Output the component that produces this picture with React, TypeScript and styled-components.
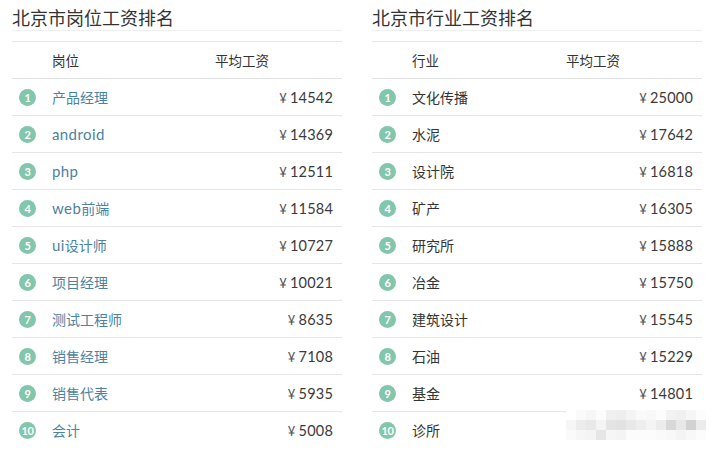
import React from "react";
import styled, { createGlobalStyle } from "styled-components";

const Global = createGlobalStyle`
  html, body { margin: 0; padding: 0; background: #fff; }
  body { font-family: Lato, "Noto Sans CJK SC", sans-serif; color: #333; }
`;

const Page = styled.div`
  display: grid;
  grid-template-columns: 330px 330px;
  column-gap: 30px;
  padding-left: 12px;
  width: 716px;
  height: 453px;
  box-sizing: border-box;
  overflow: hidden;
`;

const Panel = styled.section`
  display: flex;
  flex-direction: column;
`;

const Title = styled.h2`
  margin: 0;
  padding-top: 5px;
  height: 25px;
  line-height: 25px;
  font-size: 18px;
  font-weight: 400;
  color: #333;
  font-family: "Noto Sans CJK SC", sans-serif;
  border-bottom: 1px solid #efefef;
`;

const Table = styled.div`
  margin-top: 10px;
  border-top: 1px solid #e6e6e6;
`;

const Row = styled.div<{ $head?: boolean; $mid: number }>`
  display: grid;
  grid-template-columns: 40px ${(p) => p.$mid}px 1fr;
  align-items: center;
  height: 36px;
  border-bottom: 1px solid ${(p) => (p.$head ? "#e2e2e2" : "#e6e6e6")};
  &:last-child { border-bottom-color: transparent; }
`;

const HeadCell = styled.div`
  font-family: "Noto Sans CJK SC", sans-serif;
  font-size: 13.5px;
  color: #333;
`;

const BadgeCell = styled.div`
  display: flex;
  padding-left: 7px;
`;

const Badge = styled.span`
  width: 17px;
  height: 17px;
  border-radius: 50%;
  background: #82c6ab;
  color: #fff;
  font-family: Lato, sans-serif;
  font-weight: 700;
  font-size: 11px;
  display: inline-flex;
  align-items: center;
  justify-content: center;
  letter-spacing: -0.5px;
`;

const Name = styled.div<{ $link?: boolean }>`
  font-family: Lato, "Noto Sans CJK SC", sans-serif;
  font-size: 14px;
  color: ${(p) => (p.$link ? "#4c829f" : "#333")};
  white-space: nowrap;
`;

const Latin = styled.span`
  font-size: 15px;
  letter-spacing: 0.4px;
`;

const PriceWrap = styled.div`
  justify-self: end;
  padding-right: 9px;
  font-family: Lato, "Noto Sans CJK SC", sans-serif;
  font-size: 14.5px;
  color: #3a3a3a;
  letter-spacing: 0.2px;
`;

const Yen = styled.span`
  font-size: 13px;
  margin-right: 3px;
  color: #555;
`;

const Mosaic = styled.div`
  justify-self: end;
  align-self: start;
  display: grid;
  grid-template-columns: repeat(14, 10px);
  grid-auto-rows: 10px;
  margin-right: 2px;
  margin-top: -2px;
`;

const Tile = styled.span<{ $g: number }>`
  background: ${(p) => `rgb(${p.$g},${p.$g},${p.$g})`};
`;

const jobs: [string, string][] = [
  ["产品经理", "14542"],
  ["android", "14369"],
  ["php", "12511"],
  ["web前端", "11584"],
  ["ui设计师", "10727"],
  ["项目经理", "10021"],
  ["测试工程师", "8635"],
  ["销售经理", "7108"],
  ["销售代表", "5935"],
  ["会计", "5008"],
];

const industries: [string, string | null][] = [
  ["文化传播", "25000"],
  ["水泥", "17642"],
  ["设计院", "16818"],
  ["矿产", "16305"],
  ["研究所", "15888"],
  ["冶金", "15750"],
  ["建筑设计", "15545"],
  ["石油", "15229"],
  ["基金", "14801"],
  ["诊所", null],
];

const mosaicShades = [
  255, 250, 246, 252, 240, 238, 244, 250, 248, 252, 242, 240, 246, 252,
  246, 236, 232, 244, 228, 226, 232, 238, 244, 236, 216, 232, 210, 236,
  250, 246, 244, 230, 246, 244, 252, 252, 252, 250, 248, 244, 248, 252,
];

function renderName(name: string) {
  const m = name.match(/^([a-z]+)(.*)$/);
  if (!m) return name;
  return (
    <>
      <Latin>{m[1]}</Latin>
      {m[2]}
    </>
  );
}

function RankTable({
  head,
  mid,
  rows,
  link,
}: {
  head: string;
  mid: number;
  rows: [string, string | null][];
  link?: boolean;
}) {
  return (
    <Table>
      <Row $head $mid={mid}>
        <div />
        <HeadCell>{head}</HeadCell>
        <HeadCell>平均工资</HeadCell>
      </Row>
      {rows.map(([name, price], i) => (
        <Row key={name} $mid={mid}>
          <BadgeCell>
            <Badge>{i + 1}</Badge>
          </BadgeCell>
          <Name $link={link}>{renderName(name)}</Name>
          {price ? (
            <PriceWrap>
              <Yen>¥</Yen>
              {price}
            </PriceWrap>
          ) : (
            <Mosaic>
              {mosaicShades.map((g, k) => (
                <Tile key={k} $g={g} />
              ))}
            </Mosaic>
          )}
        </Row>
      ))}
    </Table>
  );
}

export default function App() {
  return (
    <>
      <Global />
      <Page>
        <Panel>
          <Title>北京市岗位工资排名</Title>
          <RankTable head="岗位" mid={163} rows={jobs} link />
        </Panel>
        <Panel>
          <Title>北京市行业工资排名</Title>
          <RankTable head="行业" mid={154} rows={industries} />
        </Panel>
      </Page>
    </>
  );
}
